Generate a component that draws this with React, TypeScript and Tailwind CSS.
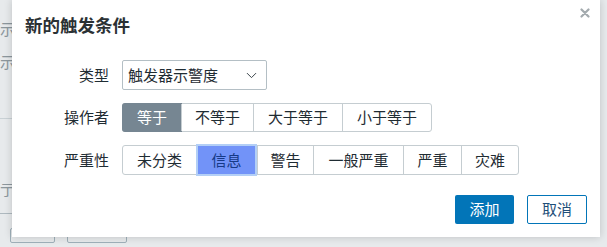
import { ChevronDown } from "lucide-react";

const operators = [
  { label: "等于", w: "w-[60px]", active: true },
  { label: "不等于", w: "w-[72px]" },
  { label: "大于等于", w: "w-[89px]" },
  { label: "小于等于", w: "w-[89px]" },
];

const severities = [
  { label: "未分类", w: "w-[73px]" },
  { label: "信息", w: "w-[61px]", active: true },
  { label: "警告", w: "w-[56px]" },
  { label: "一般严重", w: "w-[90px]" },
  { label: "严重", w: "w-[58px]" },
  { label: "灾难", w: "w-[57px]" },
];

function FormRow({ label, children, h }: { label: string; children: React.ReactNode; h: string }) {
  return (
    <div className={`flex items-center ${h}`}>
      <div className="w-[97px] shrink-0 text-right text-[15px] text-[#1f2c33]">{label}</div>
      <div className="ml-[13px] flex h-full items-stretch">{children}</div>
    </div>
  );
}

export default function App() {
  return (
    <div
      className="relative h-[247px] w-[607px] overflow-hidden bg-[#e7eaec] text-[#1f2c33]"
      style={{ fontFamily: '"Noto Sans CJK SC", "Noto Sans", sans-serif' }}
    >
      {/* page behind the overlay */}
      <div className="absolute inset-0 text-[15px] text-[#8c979d]">
        <div className="absolute left-0 top-[18px]">示</div>
        <div className="absolute left-0 top-[51px]">示</div>
        <div className="absolute left-0 top-[118px] h-px w-[12px] bg-[#c9d1d5]" />
        <div className="absolute left-0 top-[178px]">亍</div>
        <div className="absolute left-0 top-[213px] h-px w-[12px] bg-[#aeb9bf]" />
        <div className="absolute left-[10px] top-[228px] h-[15px] w-[45px] rounded-[2px] border border-[#9fb0b9]" />
        <div className="absolute left-[67px] top-[228px] h-[15px] w-[60px] rounded-[2px] border border-[#9fb0b9]" />
      </div>

      {/* dialog */}
      <div className="absolute left-[12px] top-0 flex w-[588px] flex-col bg-white pb-[13px] shadow-[0_0_8px_rgba(0,0,0,0.18)]">
        <div className="relative flex h-[50px] items-center pl-[13px]">
          <h1 className="text-[17.5px] font-bold text-[#2b3134]">新的触发条件</h1>
          <button className="absolute right-[10px] top-[7px] flex h-[11px] w-[11px] items-center justify-center">
            <svg viewBox="0 0 10 10" className="h-[10px] w-[10px]">
              <path d="M1.5 1.5 L8.5 8.5 M8.5 1.5 L1.5 8.5" stroke="#a3aaae" strokeWidth="2.2" strokeLinecap="round" />
            </svg>
          </button>
        </div>

        <div className="mt-[10px] flex flex-col gap-[13px]">
          <FormRow label="类型" h="h-[30px]">
            <div className="flex w-[145px] items-center justify-between rounded-[2px] border border-[#b4bfc5] pl-[5px] pr-[6px] text-[15px]">
              <span>触发器示警度</span>
              <ChevronDown size={17} strokeWidth={1.4} className="text-[#3a4449]" />
            </div>
          </FormRow>

          <FormRow label="操作者" h="h-[29px]">
            <div className="flex rounded-[3px] border border-[#c5cdd1]">
              {operators.map((o, i) => (
                <div
                  key={o.label}
                  className={`flex items-center justify-center text-[15px] ${o.w} ${
                    i > 0 ? "border-l border-[#c5cdd1]" : ""
                  } ${o.active ? "-m-px rounded-l-[3px] bg-[#768692] text-white" : "text-[#1f2c33]"}`}
                >
                  {o.label}
                </div>
              ))}
            </div>
          </FormRow>

          <FormRow label="严重性" h="h-[30px]">
            <div className="flex rounded-[3px] border border-[#c5cdd1]">
              {severities.map((s, i) => (
                <div
                  key={s.label}
                  className={`flex items-center justify-center text-[15px] ${s.w} ${
                    i > 0 && !s.active ? "border-l border-[#c5cdd1]" : ""
                  } ${
                    s.active
                      ? "relative z-10 -my-[2px] border-2 border-[#b3cff6] bg-[#7293f8] text-[#163a86]"
                      : "text-[#1f2c33]"
                  }`}
                >
                  {s.label}
                </div>
              ))}
            </div>
          </FormRow>
        </div>

        <div className="mt-[20px] flex justify-end gap-[13px] pr-[13px]">
          <button className="flex h-[29px] w-[59px] items-center justify-center rounded-[2px] bg-[#0275b8] text-[15px] text-white">
            添加
          </button>
          <button className="flex h-[29px] w-[60px] items-center justify-center rounded-[2px] border border-[#0275b8] bg-white text-[15px] text-[#1f4e79]">
            取消
          </button>
        </div>
      </div>
    </div>
  );
}
